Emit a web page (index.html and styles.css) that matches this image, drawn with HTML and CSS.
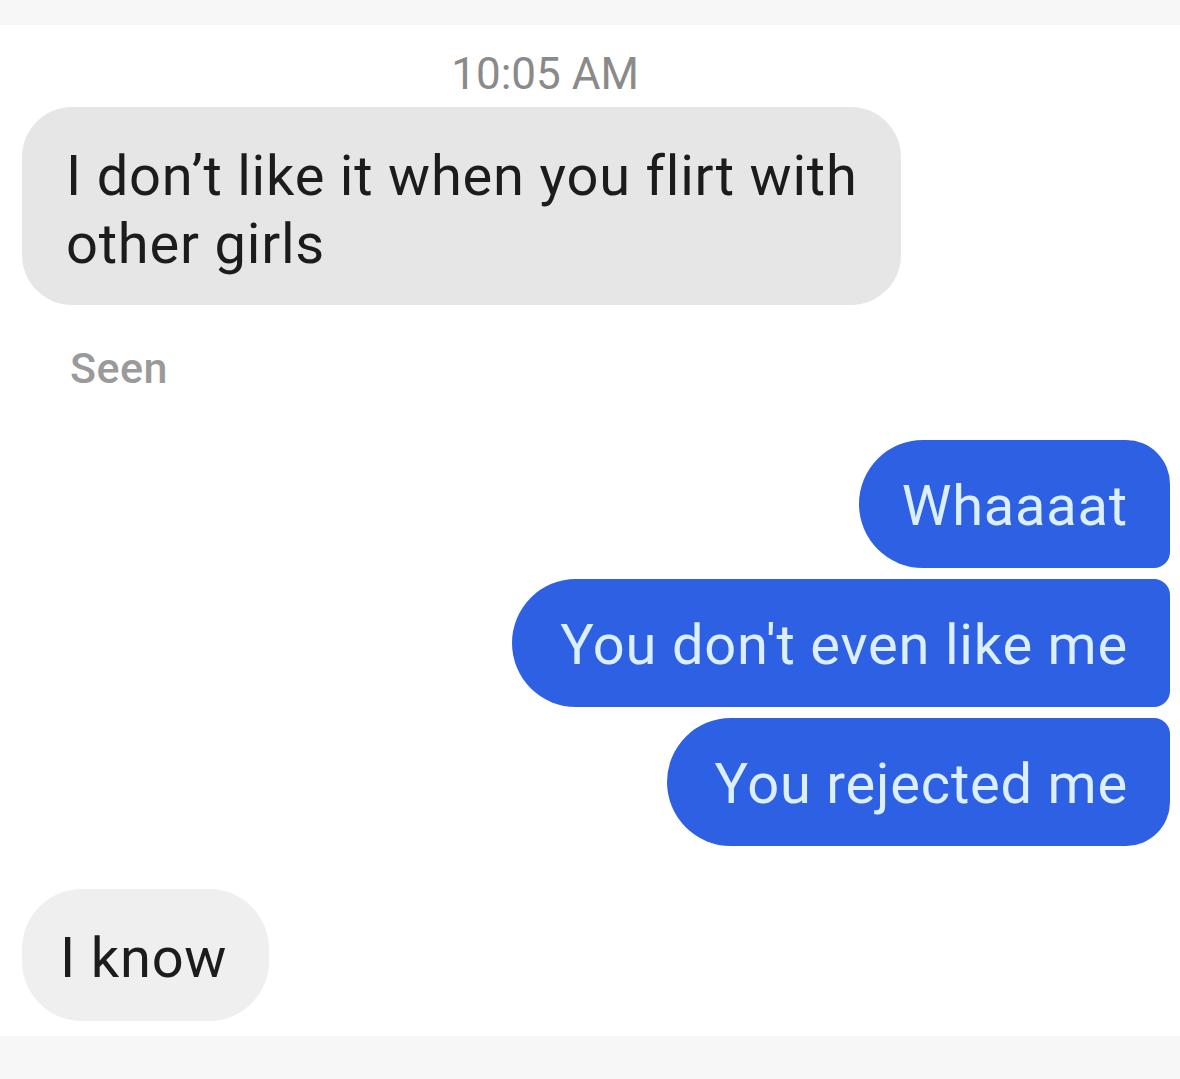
FILE: index.html
```html
<!DOCTYPE html>
<html>
<head>
<meta charset="utf-8">
<link rel="stylesheet" href="styles.css">
</head>
<body>
<div class="screen">
  <div class="bar"></div>
  <div class="chat">
    <div class="time">10:05 AM</div>
    <div class="bubble in first">I don’t like it when you flirt with<br>other girls</div>
    <div class="seen">Seen</div>
    <div class="group">
      <div class="bubble out top">Whaaaat</div>
      <div class="bubble out mid">You don't even like me</div>
      <div class="bubble out last">You rejected me</div>
    </div>
    <div class="bubble in small">I know</div>
  </div>
  <div class="bar bottom"></div>
</div>
</body>
</html>
```

FILE: styles.css
```css
html, body {
  margin: 0;
  padding: 0;
  background: #ffffff;
}
.screen {
  width: 1180px;
  height: 1079px;
  display: flex;
  flex-direction: column;
  font-family: Roboto, "Noto Sans", sans-serif;
  overflow: hidden;
}
.bar {
  height: 25px;
  background: #f7f7f7;
  flex: none;
}
.bar.bottom {
  height: 43px;
  margin-top: auto;
}
.chat {
  display: flex;
  flex-direction: column;
  align-items: flex-start;
  padding: 0 10px 0 22px;
}
.time {
  align-self: center;
  margin-top: 24px;
  margin-right: 102px;
  font-size: 44px;
  line-height: 50px;
  color: #8a8a8a;
}
.bubble {
  font-size: 56px;
  letter-spacing: 0.8px;
  line-height: 68px;
  white-space: nowrap;
}
.bubble.in {
  background: #e6e6e6;
  color: #1c1c1c;
  border-radius: 50px;
}
.bubble.first {
  margin-top: 8px;
  padding: 35px 43px 27px 44px;
}
.seen {
  margin-top: 39px;
  margin-left: 48px;
  font-size: 43px;
  letter-spacing: 0.5px;
  line-height: 48px;
  font-weight: 500;
  color: #9a9a9a;
}
.group {
  align-self: flex-end;
  margin-top: 48px;
  display: flex;
  flex-direction: column;
  align-items: flex-end;
  gap: 11px;
}
.bubble.out {
  background: #2e60e4;
  color: #dcefff;
  padding: 32px 42px 28px 48px;
  border-radius: 64px 16px 16px 64px;
}
.bubble.out.top {
  border-top-right-radius: 44px;
  padding-left: 43px;
}
.bubble.out.last {
  border-bottom-right-radius: 44px;
}
.bubble.small {
  margin-top: 43px;
  background: #efefef;
  padding: 35px 42px 29px 38px;
  border-radius: 60px;
}
```
